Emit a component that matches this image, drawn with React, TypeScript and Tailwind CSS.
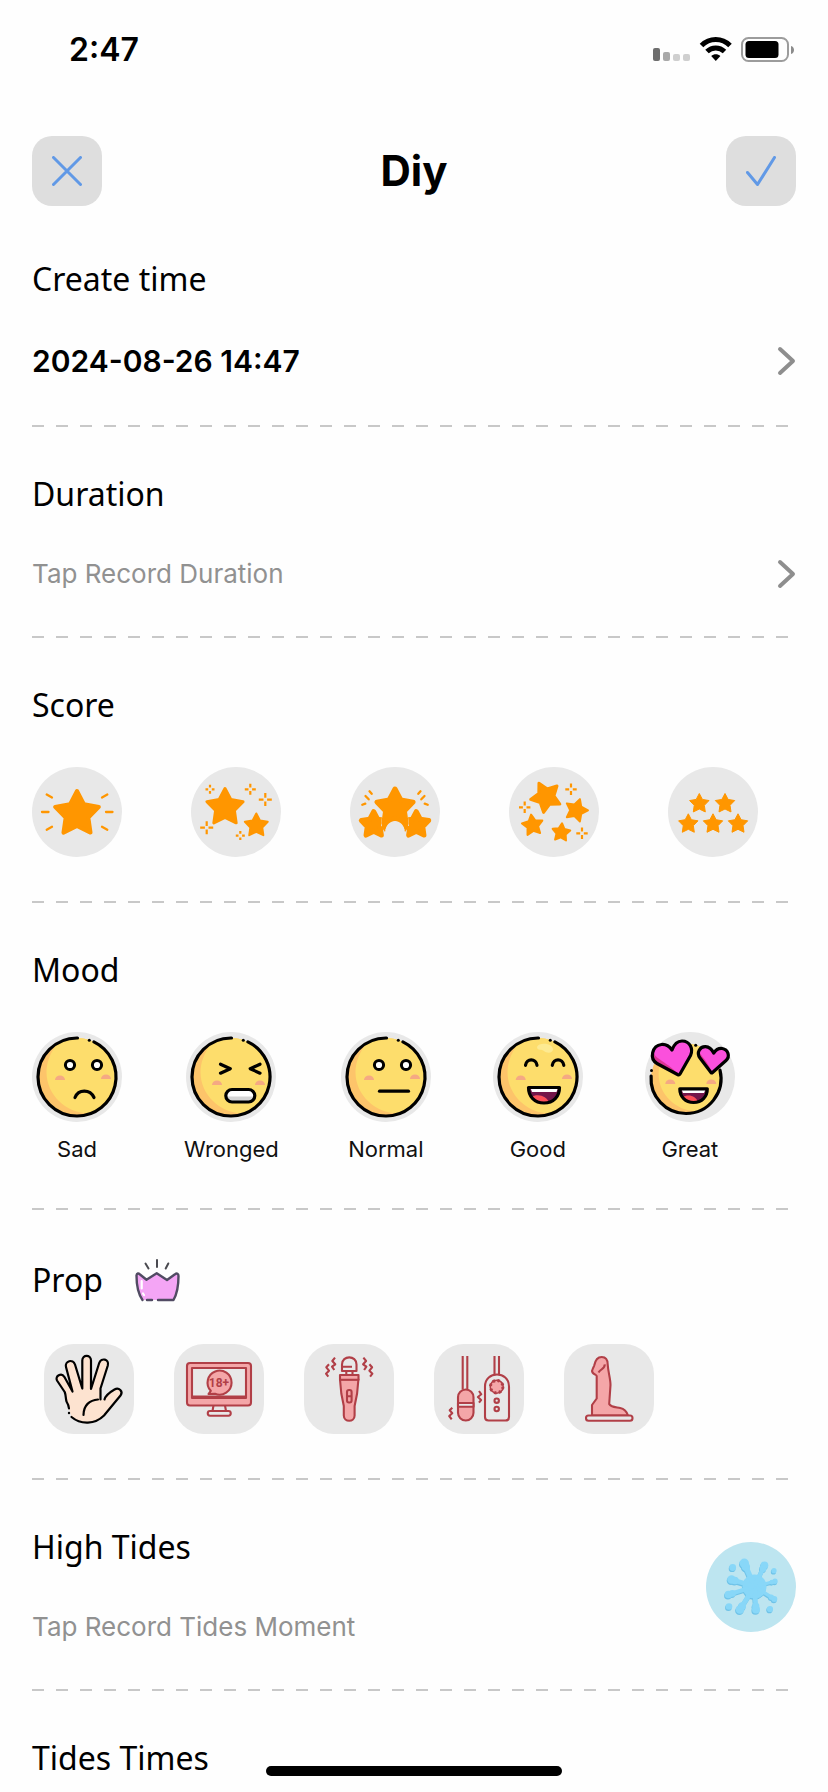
import type { ReactNode } from "react";

const ORANGE = "#ff9600";
const RED = "#b13f47";
const PINK = "#f4a6a8";
const TILE = "#e8e8e8";

function starPoints(cx: number, cy: number, r: number, rot = 0) {
  return Array.from({ length: 10 }, (_, i) => {
    const radius = i % 2 ? r * 0.52 : r;
    const a = ((i * 36 + rot - 90) * Math.PI) / 180;
    return `${(cx + radius * Math.cos(a)).toFixed(2)},${(cy + radius * Math.sin(a)).toFixed(2)}`;
  }).join(" ");
}

function Star({ cx, cy, r, rot = 0, round = 3 }: { cx: number; cy: number; r: number; rot?: number; round?: number }) {
  return (
    <polygon
      points={starPoints(cx, cy, r - round / 2, rot)}
      fill={ORANGE}
      stroke={ORANGE}
      strokeWidth={round}
      strokeLinejoin="round"
    />
  );
}

function Sparkle({ x, y, s }: { x: number; y: number; s: number }) {
  return (
    <path
      d={`M${x} ${y - s}V${y - 1.8}M${x} ${y + 1.8}V${y + s}M${x - s} ${y}H${x - 1.8}M${x + 1.8} ${y}H${x + s}`}
      stroke={ORANGE}
      strokeWidth="2.200"
      fill="none"
    />
  );
}

const rayProps = { stroke: ORANGE, strokeWidth: 2.3, strokeLinecap: "round" as const, fill: "none" };

const scores: { label: string; art: ReactNode }[] = [
  {
    label: "One star",
    art: (
      <>
        <Star cx={45} cy={47} r={25} round={4} />
        <path {...rayProps} d="M10 45h6.500M74 45h6.500M14.700 27.500l5.300 3M75.300 27.500l-5.300 3M14.700 62.800l5.300-3M75.300 62.800l-5.300-3" />
      </>
    ),
  },
  {
    label: "Two stars",
    art: (
      <>
        <Star cx={34} cy={40.500} r={20.500} />
        <Star cx={65.300} cy={58.500} r={13} round={2} />
        <Sparkle x={19} y={22.300} s={4.500} />
        <Sparkle x={59.300} y={22.300} s={5.500} />
        <Sparkle x={74.300} y={32.600} s={6.500} />
        <Sparkle x={15.700} y={60.700} s={6.500} />
        <Sparkle x={49.300} y={68.600} s={4.500} />
      </>
    ),
  },
  {
    label: "Three stars",
    art: (
      <>
        <Star cx={23.700} cy={57.600} r={15.500} round={5} />
        <Star cx={66.300} cy={57.600} r={15.500} round={5} />
        <polygon points={starPoints(45, 41, 20.500)} fill={TILE} stroke={TILE} strokeWidth="4" strokeLinejoin="round" />
        <Star cx={45} cy={41} r={21.500} round={5} />
        <path d="M32 51h26v10l-3 4c-1-6-5-10.500-10-10.500S36 59 35 65l-3-4z" fill={ORANGE} />
        <path d="M35.500 63c1-5.500 5-9 9.500-9s8.500 3.500 9.500 9z" fill={TILE} />
        <path {...rayProps} d="M19.500 24.300l2.200 2.500M15.500 29l3.200 3.300M12.300 37.800l3-1.200M70.500 24.300l-2.200 2.500M74.500 29l-3.200 3.300M77.700 37.800l-3-1.200" />
      </>
    ),
  },
  {
    label: "Four stars",
    art: (
      <>
        <Star cx={37} cy={30} r={17} rot={-27} />
        <Star cx={67.300} cy={43.300} r={12.700} rot={18} round={2} />
        <Star cx={23.600} cy={58.300} r={11.800} rot={-8} round={2} />
        <Star cx={52.200} cy={65.500} r={10.300} rot={5} round={2} />
        <Sparkle x={62} y={22.300} s={5.700} />
        <Sparkle x={15.700} y={40.300} s={5.700} />
        <Sparkle x={73} y={66.300} s={5.700} />
      </>
    ),
  },
  {
    label: "Five stars",
    art: (
      <>
        {[
          [31.300, 36.700],
          [57, 36.700],
          [20.300, 57],
          [45, 57],
          [70, 57],
        ].map(([x, y]) => (
          <Star key={`${x}-${y}`} cx={x} cy={y} r={10.700} round={1} />
        ))}
      </>
    ),
  },
];

const ink = { stroke: "#000", strokeWidth: 3.2, strokeLinecap: "round" as const, strokeLinejoin: "round" as const, fill: "none" };

function Face({ cx = 45, cy = 45, r = 39, children }: { cx?: number; cy?: number; r?: number; children?: ReactNode }) {
  return (
    <>
      <circle cx={cx} cy={cy} r={r} fill="#fdc46a" />
      <path
        d={`M${cx - r * 0.5} ${cy - r * 0.866}A${r} ${r} 0 0 1 ${cx + r} ${cy}A${r} ${r} 0 0 1 ${cx + r * 0.4} ${cy + r * 0.917}C${cx - r * 0.35} ${cy + r * 1.05} ${cx - r * 1.25} ${cy + r * 0.1} ${cx - r * 0.5} ${cy - r * 0.866}Z`}
        fill="#fddd6c"
      />
      {children}
    </>
  );
}

function RoundOutline() {
  return (
    <>
      <path {...ink} d="M45.500 6H45A39 39 0 0 0 45 84A39 39 0 0 0 61.900 9.850" />
      <circle cx="57.300" cy="8.200" r="1.500" />
    </>
  );
}

function Cheeks({ a, b }: { a: [number, number]; b: [number, number] }) {
  return (
    <>
      {[a, b].map(([x, y]) => (
        <path key={x} d={`M${x - 5} ${y}a5 4.600 0 0 1 10 0z`} fill="#f5a983" />
      ))}
    </>
  );
}

function OpenEyes() {
  return (
    <>
      <circle cx="38" cy="33" r="4.600" fill="#fff" stroke="#000" strokeWidth="3" />
      <circle cx="65" cy="33" r="4.600" fill="#fff" stroke="#000" strokeWidth="3" />
    </>
  );
}

const moods: { label: string; art: ReactNode }[] = [
  {
    label: "Sad",
    art: (
      <Face>
        <RoundOutline />
        <OpenEyes />
        <Cheeks a={[28, 48]} b={[74, 47]} />
        <path {...ink} d="M43 65.500c3.500-8.500 15-8.500 19 0" />
      </Face>
    ),
  },
  {
    label: "Wronged",
    art: (
      <Face>
        <RoundOutline />
        <path {...ink} d="M34.500 32.200l9.800 4.500-9.800 4.500M74 32.200l-9.800 4.500 9.800 4.500" />
        <Cheeks a={[31, 53]} b={[74, 53]} />
        <rect x="39.800" y="57.800" width="29" height="12" rx="6" fill="#fff" />
        <path d="M40 64.500h28.500a6 5.500 0 0 1-6 5.300H46a6 5.500 0 0 1-6-5.300z" fill="#d5d5d5" />
        <rect {...ink} x="39.800" y="57.500" width="29" height="12.500" rx="6.200" />
      </Face>
    ),
  },
  {
    label: "Normal",
    art: (
      <Face>
        <RoundOutline />
        <OpenEyes />
        <Cheeks a={[28, 48]} b={[74, 47]} />
        <path {...ink} d="M38.500 59.200h29" />
      </Face>
    ),
  },
  {
    label: "Good",
    art: (
      <Face>
        <path d="M44 15c2-5 15-4 16 2 0 5-7 4-9 2s-7 0-7-4z" fill="#fdea92" />
        <RoundOutline />
        <path {...ink} d="M32.500 33.300c1-7.200 10.500-7.200 11.500 0M59.300 33.300c1-7.200 10.500-7.200 11.500 0" />
        <Cheeks a={[27.700, 48]} b={[74, 47]} />
        <path d="M35.500 55.500h31c0 9-6 15.500-15.500 15.500s-15.500-6.500-15.500-15.500z" fill="#74164a" />
        <path d="M37.500 65c8-4 16-1 18.500 5.500-7 2-15-1-18.500-5.500z" fill="#fb4f59" />
        <path d="M37.500 56h27.500l-1.500 4H39z" fill="#fff" />
        <path {...ink} d="M35.500 55.500h31c0 9-6 15.500-15.500 15.500s-15.500-6.500-15.500-15.500z" />
      </Face>
    ),
  },
  {
    label: "Great",
    art: (
      <Face cx={41} cy={46.500} r={35}>
        <path {...ink} d="M6.100 44A35 35 0 0 0 41 81.500A35 35 0 0 0 75 38.200" />
        <circle cx="6.500" cy="38.500" r="1.500" />
        <circle cx="50.700" cy="13.200" r="1.500" />
        <Cheeks a={[25.300, 52]} b={[66.300, 52]} />
        <path d="M34.800 56.800h27.500c0 8-5.500 13.700-13.700 13.700s-13.800-5.700-13.800-13.700z" fill="#74164a" />
        <path d="M37 65c7-3.500 14-1 16 5-6 1.500-13-1-16-5z" fill="#fb4f59" />
        <path d="M36.500 57.500h24l-1.500 3.500H38z" fill="#fff" />
        <path {...ink} d="M34.800 56.800h27.500c0 8-5.500 13.700-13.700 13.700s-13.800-5.700-13.800-13.700z" />
        <path d="M32.500 42.500L12 31.500C4 27 7 13.500 16.500 12.500c5-.5 8 2 10.500 5.500C29 12.500 32 9 37 9c8 0 11.500 8 8.500 14.500L35 42c-.6 1-1.500 1-2.500.500z" fill="#fb50dc" />
        <path d="M8.500 19c0 8 16 12 23.500 22.500L12 31C8 28 6.500 23.500 8.500 19z" fill="#dc3494" />
        <path {...ink} d="M32.500 42.500L12 31.500C4 27 7 13.500 16.500 12.500c5-.5 8 2 10.500 5.500C29 12.500 32 9 37 9c8 0 11.500 8 8.500 14.500L35 42c-.6 1-1.500 1-2.500.500z" />
        <path d="M66 40.500l-11-14.500c-4-5.500 0-11.500 5.500-11.300 4.500.3 6.500 3 8.200 6.300 2-3 4.500-5 8.500-4.500 5.800.8 8.300 8 3.800 12L67.500 40.500c-.5.500-1 .5-1.500 0z" fill="#fb50dc" />
        <path d="M54 19c3 7 8 9 12.500 20.500L55.500 26c-1.800-2-2.300-4.500-1.500-7z" fill="#dc3494" />
        <path {...ink} d="M66 40.500l-11-14.500c-4-5.500 0-11.500 5.500-11.300 4.500.3 6.500 3 8.200 6.300 2-3 4.500-5 8.500-4.500 5.800.8 8.300 8 3.800 12L67.500 40.500c-.5.500-1 .5-1.500 0z" />
      </Face>
    ),
  },
];

const redLine = { stroke: RED, strokeWidth: 2.1, strokeLinejoin: "round" as const, fill: "none" };

const props: { label: string; art: ReactNode }[] = [
  {
    label: "Hand",
    art: (
      <>
        <path
          d="M25 64.500c-.2-3-1-4.500-2.500-7-1-3.500-.5-6-1.800-9.500L13 36.500c-2.300-4.500 4.500-8 7.300-3.700L28.500 47.500 22 23c-1.500-6 7-8.500 9-2.500l7.300 24V16.500c0-6.300 8.700-6.300 8.700 0V45l8.200-26c2-6 10.300-3.700 8.600 2.500L56.500 44.500v11h4c1-4 4-6.500 10-10 4.500-2.500 9 2 6 6L60 71.500c-9 9-23 9.500-32.500 1.500z"
          fill="#fde3d0"
        />
        <path
          d="M25 64.500c-.2-3-1-4.500-2.500-7-1-3.500-.5-6-1.800-9.500L13 36.500c-2.300-4.500 4.500-8 7.300-3.700L28.500 47.500 22 23c-1.500-6 7-8.500 9-2.500l7.300 24V16.500c0-6.300 8.700-6.300 8.700 0V45l8.200-26c2-6 10.300-3.700 8.600 2.500L56.500 44.500v11M39.500 71c0-9.500 6-15 14.500-15.500M60.500 55.500c1-4 4-6.500 10-10 4.500-2.500 9 2 6 6L60 71.500c-9 9-23 9.500-32.500 1.500"
          stroke="#000"
          strokeWidth="2.200"
          strokeLinecap="round"
          strokeLinejoin="round"
          fill="none"
        />
        <circle cx="25" cy="69" r="1.200" />
      </>
    ),
  },
  {
    label: "Video",
    art: (
      <>
        <rect {...redLine} x="13" y="19" width="64" height="42.500" rx="3" fill={PINK} />
        <rect {...redLine} x="18" y="24" width="54" height="30" fill={TILE} />
        <path {...redLine} d="M18 53h54" strokeWidth="2.800" />
        <path {...redLine} d="M39.500 61.500l-1 5.500h13.500l-1-5.500M36 67h18.500c3 0 3 4.700 0 4.700H36c-3 0-3-4.700 0-4.700z" />
        <path {...redLine} d="M34.500 50l2.300-3.200A12 12 0 1 1 41 49.700z" fill={PINK} />
        <text x="45" y="42.800" fontSize="12" fontWeight="700" textAnchor="middle" fill={RED} className="font-['Roboto',sans-serif]">
          18+
        </text>
      </>
    ),
  },
  {
    label: "Massager",
    art: (
      <>
        <path {...redLine} d="M38 27V20.500c0-9.500 14.500-9.500 14.500 0V27zM38 22.700h10M42.300 27v4M48.500 27v4" />
        <path {...redLine} d="M36 35.500l1.300 14 2.500 12.500v9.500c0 7 10.800 7 10.800 0V62l2.500-12.500 1.300-14z" fill={PINK} />
        <rect {...redLine} x="36" y="31" width="18.500" height="4.800" fill={PINK} />
        <rect {...redLine} x="43" y="46" width="4.600" height="12.500" rx="2" />
        <path {...redLine} d="M43 52.200h4.600M31 13.700l-2.700 3.300 3 3.300-3.300 2.400 2.300 3.300M25 20.300l-2.700 3 2.700 3.400-3 3 2.300 3M59.400 13.700l2.700 3.300-3 3.300 3.300 2.400-2.300 3.300M65.400 20.300l2.700 3-2.700 3.400 3 3-2.300 3" />
      </>
    ),
  },
  {
    label: "Remote",
    art: (
      <>
        <path {...redLine} d="M28.700 12v33.500M33.300 12v33.500M60.500 12v18M65 12v18" />
        <rect {...redLine} x="24" y="45.500" width="15.500" height="31" rx="7.700" fill={PINK} />
        <rect {...redLine} x="24" y="59" width="15.500" height="3.800" fill={TILE} />
        <path {...redLine} d="M51 42.500c0-16 24-16 24 0V73c0 2.500-1 3.500-3.500 3.500h-17C52 76.500 51 75.500 51 73z" />
        <circle cx="62.700" cy="42.700" r="6.500" fill={PINK} stroke={RED} strokeWidth="1.500" />
        <circle cx="62.700" cy="42.700" r="6.200" fill="none" stroke={RED} strokeWidth="3" strokeDasharray="2.400 2.470" />
        <circle {...redLine} cx="62.700" cy="56.700" r="2.200" />
        <circle {...redLine} cx="62.700" cy="65" r="2.200" />
        <path {...redLine} d="M45 47l2.300 3.300-3.400 2.700 3.200 3-2.100 2.700M18.300 63.700l-2.600 2.600 2.600 3-3.100 2.700 2.500 3.300" />
      </>
    ),
  },
  {
    label: "Toy",
    art: (
      <>
        <path
          {...redLine}
          d="M28.500 28.500c-1.500-3 1-4 1.700-7 1-5 3.300-8.500 7.500-8.500 4 0 6 3 6 7.500.5 8 2.800 14 2.800 20.500L45.200 60c1.300 3 6 3 11 4 4 .8 6.500 3.500 7.800 7.500H28V61l4.700-6.500V32c0-1-2.500-1.500-4.200-3.500z"
          fill={PINK}
        />
        <path {...redLine} d="M40.700 20.300c.5 4-3.700 4.500-6.200 8.200" />
        <rect {...redLine} x="22" y="71.500" width="46.500" height="5.200" rx="2.500" fill={TILE} />
      </>
    ),
  },
];

const splatArms: [number, number, number][] = [
  [38.300, 21.300, 4.700],
  [58.500, 23.300, 3.800],
  [69, 39.300, 2.700],
  [68.300, 57, 3],
  [50, 67.500, 4],
  [34, 67.500, 4.300],
  [22.500, 52.500, 3.800],
  [25.500, 37.500, 4.200],
];
const splatDrops: [number, number, number][] = [
  [26.700, 25.500, 3.400],
  [68, 28.700, 2.600],
  [64, 67, 3.100],
  [23, 64.500, 3.300],
];

function SplatShape({ color }: { color: string }) {
  return (
    <g fill={color} stroke={color}>
      <circle cx="48.500" cy="44.500" r="12" stroke="none" />
      {splatArms.map(([x, y, r]) => (
        <g key={x}>
          <line x1={x} y1={y} x2="48.500" y2="44.500" strokeWidth={r * 1.15} />
          <circle cx={x} cy={y} r={r} stroke="none" />
          <circle cx={x + (48.5 - x) * 0.15} cy={y + (44.5 - y) * 0.15} r={r * 0.9} stroke="none" />
        </g>
      ))}
      {splatDrops.map(([x, y, r]) => (
        <circle key={x} cx={x} cy={y} r={r} stroke="none" />
      ))}
    </g>
  );
}

function Art({ children }: { children: ReactNode }) {
  return (
    <svg viewBox="0 0 90 90" className="block size-[90px]" aria-hidden="true">
      {children}
    </svg>
  );
}

function Divider() {
  return <div className="h-[2px] bg-[repeating-linear-gradient(90deg,#c8c8c8_0_12px,transparent_12px_24px)]" />;
}

function Heading({ children }: { children: ReactNode }) {
  return <h2 className="font-['Noto_Sans',sans-serif] text-[32px] leading-[40px] text-black">{children}</h2>;
}

function Chevron() {
  return (
    <svg viewBox="0 0 20 30" className="h-[30px] w-5" fill="none" stroke="#8e8e8e" strokeWidth="4" strokeLinecap="round" strokeLinejoin="round" aria-hidden="true">
      <path d="M4 3l13 12L4 27" />
    </svg>
  );
}

function StatusBar() {
  return (
    <div className="flex h-[100px] items-center justify-between pr-8 pl-[69px]">
      <span className="text-[32px] leading-[40px] font-semibold">2:47</span>
      <svg viewBox="0 0 144 28" className="h-7 w-[144px]" aria-label="Weak signal, Wi-Fi, battery" role="img">
        <rect x="1" y="12" width="7" height="13" rx="2" fill="#6e6e6e" />
        <rect x="11" y="16" width="7" height="9" rx="2" fill="#a9a9a9" />
        <rect x="21" y="18" width="7" height="7" rx="2" fill="#cfcfcf" />
        <rect x="31" y="18" width="7" height="7" rx="2" fill="#cfcfcf" />
        <g fill="none" stroke="#000" strokeWidth="5">
          <path d="M49.500 9.500c8-8 20.500-8 28.500 0" />
          <path d="M55 15.500c5-4.800 12.500-4.800 17.500 0" />
        </g>
        <path d="M63.800 25l-4.600-5c2.600-2.500 6.600-2.500 9.200 0z" />
        <rect x="90" y="2" width="46" height="23" rx="6.500" fill="none" stroke="#9c9c9c" strokeWidth="2" />
        <rect x="93.500" y="5" width="33" height="17" rx="3.500" />
        <path d="M139 10c4 1 4 7 0 8z" fill="#8c8c8c" />
      </svg>
    </div>
  );
}

export default function App() {
  return (
    <div className="min-h-screen bg-[#fefefe] pb-3 font-['Inter',sans-serif] text-black">
      <StatusBar />
      <header className="flex items-center justify-between px-8 pt-9">
        <button type="button" aria-label="Close" className="flex size-[70px] items-center justify-center rounded-[20px] bg-[#dedede]">
          <svg viewBox="0 0 30 30" className="size-[30px]" fill="none" stroke="#6199e6" strokeWidth="3" strokeLinecap="round">
            <path d="M1.500 1.500l27 27M28.500 1.500l-27 27" />
          </svg>
        </button>
        <h1 className="text-[42px] leading-[50px] font-bold">Diy</h1>
        <button type="button" aria-label="Save" className="flex size-[70px] items-center justify-center rounded-[20px] bg-[#dedede]">
          <svg viewBox="0 0 30 30" className="size-[30px]" fill="none" stroke="#6199e6" strokeWidth="3" strokeLinecap="round" strokeLinejoin="round">
            <path d="M1.500 16.500l10 12L28.500 1.500" />
          </svg>
        </button>
      </header>

      <main className="px-8">
        <section className="pt-[53px] pb-[42px]">
          <Heading>Create time</Heading>
          <button type="button" className="mt-10 flex w-full items-center justify-between text-left text-[30px] leading-[44px] font-semibold">
            2024-08-26 14:47
            <Chevron />
          </button>
        </section>
        <Divider />

        <section className="pt-[47px] pb-[42px]">
          <Heading>Duration</Heading>
          <button type="button" className="mt-10 flex w-full items-center justify-between text-left text-[26px] leading-[40px] text-[#919191]">
            Tap Record Duration
            <Chevron />
          </button>
        </section>
        <Divider />

        <section className="pt-[47px] pb-11">
          <Heading>Score</Heading>
          <div className="mt-[42px] flex gap-[69px]">
            {scores.map((s) => (
              <button key={s.label} type="button" aria-label={s.label} className="rounded-full bg-[#e8e8e8]">
                <Art>{s.art}</Art>
              </button>
            ))}
          </div>
        </section>
        <Divider />

        <section className="pt-[47px] pb-11">
          <Heading>Mood</Heading>
          <div className="mt-[42px] flex gap-[62px]">
            {moods.map((m) => (
              <button key={m.label} type="button" className="flex flex-col items-center">
                <span className="rounded-full bg-[#e8e8e8]">
                  <Art>{m.art}</Art>
                </span>
                <span className="mt-3 text-[22px] leading-[30px] text-[#111]">{m.label}</span>
              </button>
            ))}
          </div>
        </section>
        <Divider />

        <section className="pt-[46px] pb-11">
          <div className="flex h-12 items-center gap-8">
            <Heading>Prop</Heading>
            <svg viewBox="0 0 45 43" className="h-[43px] w-[45px]" fill="none" aria-hidden="true">
              <path d="M1.500 16.500c.3-2.500 2-2.500 3.500-1l6.500 5.200 10.200-6.500L32 21l8-5.700c2-1.500 3.500-.5 3.500 1.700C43.500 26 42.500 34 38.500 41H7.500C2.500 34 1.500 26 1.500 16.500z" fill="#f4a5f5" />
              <path d="M7.500 41C2.500 34 1.500 26 1.500 16.500c.3-2.500 2-2.500 3.500-1l6.500 5.200 10.200-6.500L32 21l8-5.700c2-1.500 3.500-.5 3.500 1.700C43.500 26 42.500 34 38.500 41H23M12 41h5" stroke="#514b63" strokeWidth="2.400" strokeLinecap="round" strokeLinejoin="round" />
              <path d="M10.500 4.500l3 5M22 1v7M33.300 4.500l-2.600 5" stroke="#4a4a50" strokeWidth="2" strokeLinecap="round" />
              <path d="M6.700 22v7.500M8 34.500l1 1.500" stroke="#fff" strokeWidth="2.200" strokeLinecap="round" />
            </svg>
          </div>
          <div className="mt-10 flex gap-10 px-3">
            {props.map((p) => (
              <button key={p.label} type="button" aria-label={p.label} className="rounded-[30px] bg-[#e8e8e8]">
                <Art>{p.art}</Art>
              </button>
            ))}
          </div>
        </section>
        <Divider />

        <section className="flex items-center justify-between pt-[47px] pb-[42px]">
          <div>
            <Heading>High Tides</Heading>
            <p className="mt-10 text-[26px] leading-[40px] text-[#919191]">Tap Record Tides Moment</p>
          </div>
          <button type="button" aria-label="Record tide" className="rounded-full bg-[#bde5f0]">
            <Art>
              <g transform="translate(-0.600 1.200)">
                <SplatShape color="#6fc3e8" />
              </g>
              <SplatShape color="#88d7f8" />
            </Art>
          </button>
        </section>
        <Divider />

        <section className="pt-[47px]">
          <Heading>Tides Times</Heading>
        </section>
      </main>

      <div className="fixed inset-x-0 bottom-4 flex justify-center">
        <div className="h-[10px] w-[296px] rounded-full bg-black" />
      </div>
    </div>
  );
}
